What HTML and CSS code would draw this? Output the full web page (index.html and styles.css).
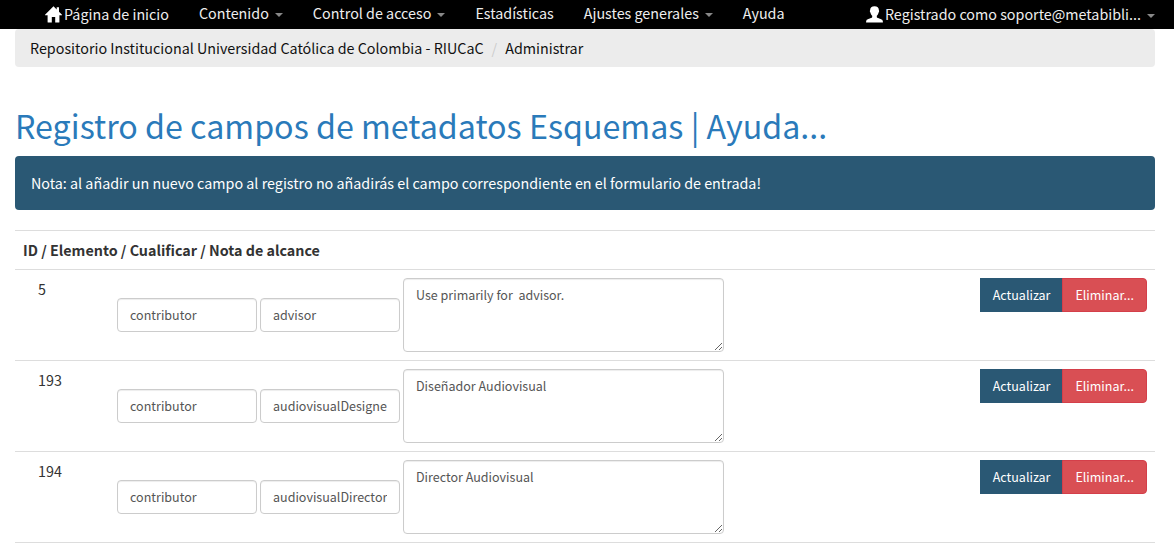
FILE: index.html
```html
<!DOCTYPE html>
<html lang="es">
<head>
<meta charset="utf-8">
<meta name="viewport" content="width=device-width, initial-scale=1">
<title>Registro de campos de metadatos</title>
<link rel="stylesheet" href="styles.css">
</head>
<body>
<header class="navbar">
  <nav class="nav">
    <a class="nav-link nav-link-icon" href="#"><svg class="icon" viewBox="0 0 17 17" aria-hidden="true"><path d="M8.5 0.3 L11.7 3.5 V1.3 H14 V5.8 L17 8.8 V9.3 H14.4 V16 Q14.4 16.5 13.9 16.5 H10.2 V11 H6.8 V16.5 H3.1 Q2.6 16.5 2.6 16 V9.3 H0 V8.8 Z"/></svg>Página de inicio</a>
    <a class="nav-link" href="#">Contenido<span class="caret"></span></a>
    <a class="nav-link" href="#">Control de acceso<span class="caret"></span></a>
    <a class="nav-link" href="#">Estadísticas</a>
    <a class="nav-link" href="#">Ajustes generales<span class="caret"></span></a>
    <a class="nav-link" href="#">Ayuda</a>
  </nav>
  <a class="nav-link nav-link-icon" href="#"><svg class="icon" viewBox="0 0 17 17" aria-hidden="true"><path d="M8.5 0.3 C11.3 0.3 12.9 1.8 12.9 4.2 C13.3 4.5 13.2 5.8 12.6 6.4 C12.3 8 11.5 9.1 10.8 9.7 V11.3 C11.6 12.4 16 13 16.6 14.4 Q17 15.3 16.9 16.5 H0.1 Q0 15.3 0.4 14.4 C1 13 5.4 12.4 6.2 11.3 V9.7 C5.5 9.1 4.7 8 4.4 6.4 C3.8 5.8 3.7 4.5 4.1 4.2 C4.1 1.8 5.7 0.3 8.5 0.3 Z"/></svg>Registrado como soporte@metabibli...<span class="caret"></span></a>
</header>
<main class="container">
  <ol class="breadcrumb">
    <li><a href="#">Repositorio Institucional Universidad Católica de Colombia - RIUCaC</a></li>
    <li><a href="#">Administrar</a></li>
  </ol>
  <h1 class="title">Registro de campos de metadatos <a href="#">Esquemas</a> | <a href="#">Ayuda...</a></h1>
  <p class="alert">Nota: al añadir un nuevo campo al registro no añadirás el campo correspondiente en el formulario de entrada!</p>
  <table class="table">
    <thead>
      <tr><th colspan="3">ID / Elemento / Cualificar / Nota de alcance</th></tr>
    </thead>
    <tbody>
      <tr>
        <td class="cell-id">5</td>
        <td><div class="fields">
          <input class="control text" type="text" value="contributor" aria-label="Elemento">
          <input class="control text" type="text" value="advisor" aria-label="Cualificar">
          <textarea class="control note" aria-label="Nota de alcance">Use primarily for  advisor.</textarea>
        </div></td>
        <td class="cell-actions"><div class="btn-group"><button class="btn" type="button">Actualizar</button><button class="btn btn-delete" type="button">Eliminar...</button></div></td>
      </tr>
      <tr>
        <td class="cell-id">193</td>
        <td><div class="fields">
          <input class="control text" type="text" value="contributor" aria-label="Elemento">
          <input class="control text" type="text" value="audiovisualDesigner" aria-label="Cualificar">
          <textarea class="control note" aria-label="Nota de alcance">Diseñador Audiovisual</textarea>
        </div></td>
        <td class="cell-actions"><div class="btn-group"><button class="btn" type="button">Actualizar</button><button class="btn btn-delete" type="button">Eliminar...</button></div></td>
      </tr>
      <tr>
        <td class="cell-id">194</td>
        <td><div class="fields">
          <input class="control text" type="text" value="contributor" aria-label="Elemento">
          <input class="control text" type="text" value="audiovisualDirector" aria-label="Cualificar">
          <textarea class="control note" aria-label="Nota de alcance">Director Audiovisual</textarea>
        </div></td>
        <td class="cell-actions"><div class="btn-group"><button class="btn" type="button">Actualizar</button><button class="btn btn-delete" type="button">Eliminar...</button></div></td>
      </tr>
    </tbody>
  </table>
</main>
</body>
</html>
```
FILE: styles.css
```css
* { box-sizing: border-box; }
body {
  margin: 0;
  background: #fff;
  color: #333;
  font-family: "Source Sans Pro", "Noto Sans CJK SC", "Noto Sans", sans-serif;
  font-size: 16px;
  /* x-height ratio of Source Sans Pro, kept for the fallback families */
  font-size-adjust: 0.486;
  line-height: 22px;
}
a { color: inherit; text-decoration: none; }
.navbar {
  display: flex;
  justify-content: space-between;
  background: #000;
  color: #eee;
  padding: 0 4px 0 30px;
}
.nav { display: flex; }
.nav-link {
  display: flex;
  align-items: center;
  padding: 2px 15px 5px;
  white-space: nowrap;
}
.nav-link-icon { padding: 3px 15px 4px; }
.icon { width: 17px; height: 17px; margin-right: 2px; fill: #fff; }
.caret {
  margin: 3px 0 0 6px;
  border: 4px solid transparent;
  border-top-color: #888;
  border-bottom: 0;
}
.container { padding: 0 19px 0 15px; }
.breadcrumb {
  display: flex;
  margin: 0;
  padding: 8px 15px;
  list-style: none;
  background: #ececec;
  border-radius: 4px;
  color: #111;
}
.breadcrumb li + li::before { content: "/"; color: #ccc; padding: 0 8px; }
.title {
  margin: 39px 0 11px;
  color: #2a7aba;
  font-size: 36px;
  font-weight: 400;
  line-height: 39px;
}
.alert {
  margin: 0 0 20px;
  padding: 16px;
  background: #2a5874;
  border-radius: 4px;
  color: #fff;
}
.table { width: 100%; border-collapse: collapse; border-bottom: 1px solid #ddd; }
.table th, .table td {
  padding: 8px;
  border-top: 1px solid #ddd;
  text-align: left;
  vertical-align: top;
}
.table .cell-id { width: 102px; padding-left: 23px; }
.table td { padding-left: 0; }
.fields { display: flex; align-items: center; gap: 3px; }
.control {
  padding: 6px 12px;
  border: 1px solid #ccc;
  border-radius: 4px;
  box-shadow: inset 0 1px 1px rgba(0, 0, 0, 0.075);
  background: #fff;
  color: #555;
  font-family: inherit;
  font-size: 14px;
  font-size-adjust: inherit;
  line-height: 20px;
}
.text { width: 140px; height: 34px; padding: 5px 12px 7px; }
.note { display: block; width: 321px; height: 74px; resize: both; }
.cell-actions { width: 180px; }
.btn-group { display: flex; justify-content: flex-end; }
.btn {
  padding: 6px 12px;
  border: 1px solid #2a5874;
  background: #2a5874;
  color: #fff;
  font-family: inherit;
  font-size: 14px;
  font-size-adjust: inherit;
  line-height: 20px;
  white-space: nowrap;
}
.btn-delete {
  margin-left: -1px;
  border-color: #d43f4a;
  border-radius: 0 4px 4px 0;
  background: #d94f54;
}
```
